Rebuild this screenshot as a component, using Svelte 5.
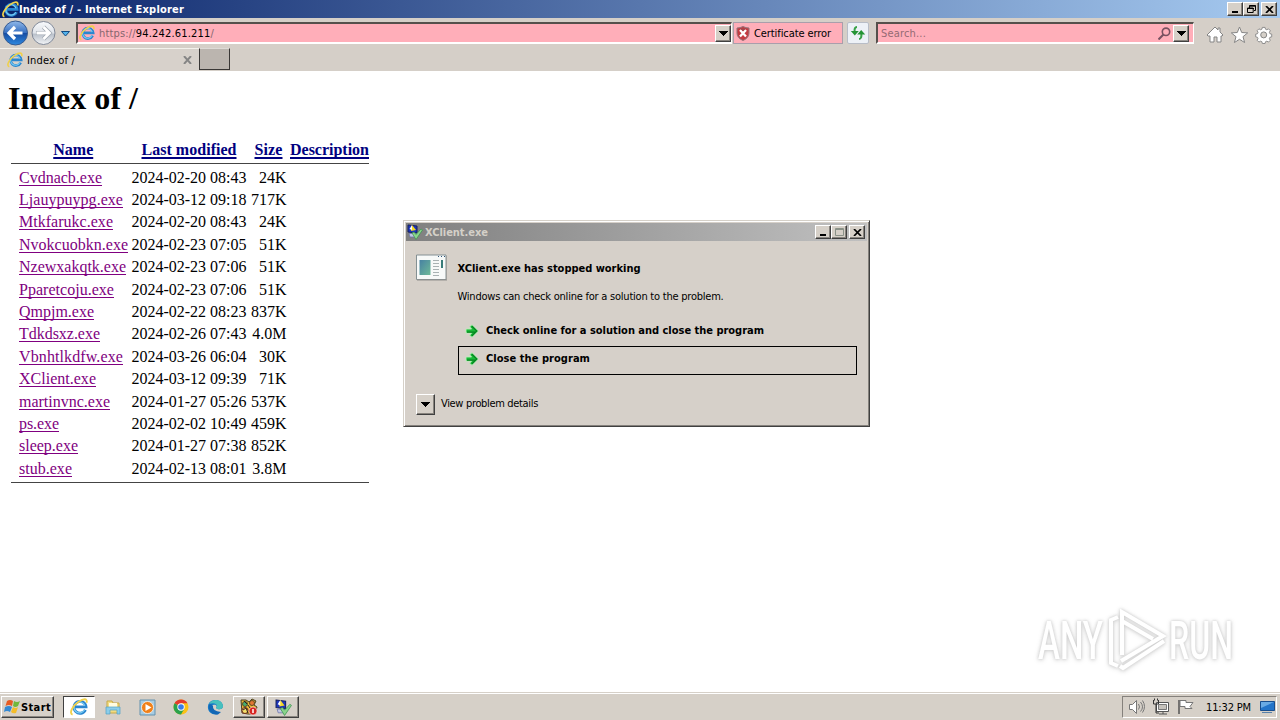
<script>
  const files = [
    ['Cvdnacb.exe', '2024-02-20 08:43', '24K', 83],
    ['Ljauypuypg.exe', '2024-03-12 09:18', '717K', 104],
    ['Mtkfarukc.exe', '2024-02-20 08:43', '24K', 94],
    ['Nvokcuobkn.exe', '2024-02-23 07:05', '51K', 109],
    ['Nzewxakqtk.exe', '2024-02-23 07:06', '51K', 107],
    ['Pparetcoju.exe', '2024-02-23 07:06', '51K', 95],
    ['Qmpjm.exe', '2024-02-22 08:23', '837K', 75],
    ['Tdkdsxz.exe', '2024-02-26 07:43', '4.0M', 81],
    ['Vbnhtlkdfw.exe', '2024-03-26 06:04', '30K', 104],
    ['XClient.exe', '2024-03-12 09:39', '71K', 77],
    ['martinvnc.exe', '2024-01-27 05:26', '537K', 91],
    ['ps.exe', '2024-02-02 10:49', '459K', 40],
    ['sleep.exe', '2024-01-27 07:38', '852K', 59],
    ['stub.exe', '2024-02-13 08:01', '3.8M', 53]
  ];

  // Spreads the letters of a label so that it fills the given width.
  function fit(node, width) {
    const natural = node.getBoundingClientRect().width;
    node.style.letterSpacing = `${(width - natural) / node.textContent.length}px`;
  }
</script>

{#snippet ie(size)}
  <svg width={size} height={size} viewBox="0 0 16 16">
    <path d="M13.700 10.600a5.300 5.300 0 1 1 .5-2.700H5" fill="none" stroke="#2a86cf" stroke-width="2.600" />
    <path d="M12.900 10.500a4.900 4.900 0 1 1 .3-3.500" fill="none" stroke="#79cdf4" stroke-width="1.100" />
    <path d="M2.300 14.800C-1.300 13.600 2.400 7 7.600 3.400 11.600.6 15.800-.2 14.700 4.300" fill="none" stroke="#f0d04a" stroke-width="1.600" />
  </svg>
{/snippet}

{#snippet caret()}
  <svg width="9" height="5" viewBox="0 0 9 5" shape-rendering="crispEdges"><path d="M0 0h9L4.500 5z" fill="#000" /></svg>
{/snippet}

{#snippet go()}
  <svg width="14" height="14" viewBox="0 0 14 14">
    <path d="M1 5h5.500L4.700 2.800 7 .7 13.300 7 7 13.300l-2.300-2L6.500 9H1z" fill="#17b936" stroke="#b9efb8" stroke-width=".9" />
    <path d="M7 2.300 11.800 7 7 11.700M2 8.200h9" fill="none" stroke="#078421" stroke-width="1.200" />
  </svg>
{/snippet}

{#snippet appIcon(size)}
  <svg width={size} height={size} viewBox="0 0 16 16">
    <path d="M1 1 10 2v7L1 8z" fill="#1d35bd" stroke="#15205f" />
    <path d="m5 1 4 5-5 1z" fill="#f5d728" /><path d="m2.500 5 2.500-4v5z" fill="#fff" />
    <path d="M2 9.500h7l1 3.500H3z" fill="#c2c6e4" stroke="#6670aa" stroke-width=".7" />
    <path d="m5 9 4 6.500L15.500 6 14 5 9 10.500 7 8z" fill="#8bd58c" stroke="#3a9150" stroke-width=".7" />
  </svg>
{/snippet}

{#snippet closeGlyph()}
  <svg width="9" height="7" viewBox="0 0 9 7"><path d="m1 0 7 7M8 0 1 7" stroke="#000" stroke-width="1.700" /></svg>
{/snippet}

<main>
  <header class="title">
    {@render ie(17)}
    <b><span use:fit={165}>Index of / - Internet Explorer</span></b>
    <div class="controls">
      <i class="win"><svg width="9" height="8"><path d="M1 6h6v2H1z" /></svg></i>
      <i class="win"><svg width="9" height="8"><path d="M2.500 3V.5h6v5H7M2 1.200h7M.5 3h5.700v4.500H.5zM0 3.500h7" fill="none" stroke="#000" /></svg></i>
      <i class="win gap">{@render closeGlyph()}</i>
    </div>
  </header>

  <nav>
    <svg class="travel" width="74" height="29" viewBox="0 0 74 29">
      <defs>
        <linearGradient id="blue" x2="0" y2="1"><stop stop-color="#91b9ea" /><stop offset=".48" stop-color="#3971c2" /><stop offset=".52" stop-color="#164da4" /><stop offset="1" stop-color="#2f8ae0" /></linearGradient>
        <linearGradient id="silver" x2="0" y2="1"><stop stop-color="#f8fafc" /><stop offset=".5" stop-color="#dfe3e9" /><stop offset=".55" stop-color="#b9c0ca" /><stop offset="1" stop-color="#f3f5f7" /></linearGradient>
      </defs>
      <circle cx="15.500" cy="15" r="12" fill="url(#blue)" stroke="#375b91" />
      <circle cx="43.500" cy="15" r="11.500" fill="url(#silver)" stroke="#818998" />
      <path d="M15 9 9 15l6 6M9.500 15h13" fill="none" stroke="#fff" stroke-width="3.200" />
      <path d="m43.500 9 6 6-6 6M49 15H36" fill="none" stroke="#9da4ae" stroke-width="4.200" />
      <path d="m43.500 9 6 6-6 6M49 15H36.500" fill="none" stroke="#fff" stroke-width="2.800" />
      <path d="M61.500 13.500h8l-4 4.500z" fill="#52b3ec" stroke="#124b82" />
    </svg>
    <div class="address">
      {@render ie(16)}
      <span class="url"><span use:fit={115}><em>https://</em>94.242.61.211<em>/</em></span></span>
      <i class="drop">{@render caret()}</i>
    </div>
    <div class="cert">
      <svg width="14" height="15" viewBox="0 0 14 15"><path d="M1 2q3 0 6-1.500Q10 2 13 2v5q0 5-6 7.500Q1 12 1 7z" fill="#c43b42" stroke="#93747a" /><path d="m4 4 6 6.500m0-6.500-6 6.500" stroke="#fff" stroke-width="2.300" /><path d="M4 2.500h6L7 5z" fill="#9d4a4e" /></svg>
      <span class="low" use:fit={77}>Certificate error</span>
    </div>
    <div class="refresh">
      <svg width="16" height="14" viewBox="0 0 16 14"><path d="M7 1Q4 1 4.700 6M9 13q3 0 2.300-6" fill="none" stroke="#38a247" stroke-width="2" /><path d="M.8 5h8L4.800 9.500zM7.200 8.500h8l-4-4.500z" fill="#249435" /></svg>
    </div>
    <div class="search">
      <span class="low"><span use:fit={45}>Search...</span></span>
      <svg class="lens" width="13" height="13" viewBox="0 0 13 13"><circle cx="8" cy="4.800" r="3.700" fill="none" stroke="#785160" stroke-width="1.600" /><path d="m5.500 7.500-5 5" stroke="#785160" stroke-width="2" /></svg>
      <i class="drop">{@render caret()}</i>
    </div>
    <svg class="tools" width="68" height="18" viewBox="0 0 68 18">
      <g fill="#fff" stroke="#858585" stroke-width="1">
        <path d="m1 9 8-8 3 3V2h2v4l3 3-1 1h-1v6h-4v-5H8v5H4v-6H2z" />
        <path d="m33.500 1 2.200 5.500 6 .4-4.700 3.800 1.600 5.800-5.100-3.200-5.100 3.200 1.600-5.800-4.700-3.800 6-.4z" />
        <path d="m56.500 1h3l.5 2 1.500.6 1.800-1 2 2-1 1.900.6 1.500 2 .5v3l-2 .5-.6 1.500 1 1.800-2 2-1.800-1-1.500.6-.5 2h-3l-.5-2-1.500-.6-1.800 1-2-2 1-1.800-.6-1.500-2-.5v-3l2-.5.6-1.500-1-1.900 2-2 1.800 1 1.500-.6z" transform="translate(5.500 .5) scale(.9)" />
        <circle cx="57.700" cy="8.900" r="3" fill="#d5d0c9" />
      </g>
    </svg>
  </nav>

  <div class="tabs">
    <div class="tab">
      {@render ie(16)}
      <span class="low" use:fit={48}>Index of /</span>
      <svg width="9" height="8" viewBox="0 0 9 8"><path d="m1 0 7 8M8 0 1 8" stroke="#858585" stroke-width="1.900" /></svg>
    </div>
    <div class="newtab"></div>
  </div>

  <section class="page">
    <h1><span use:fit={130}>Index of /</span></h1>
    <div class="listing">
      <div class="row head">
        <a><span use:fit={40}>Name</span></a><a><span use:fit={95}>Last modified</span></a><a><span use:fit={28}>Size</span></a><a><span use:fit={79}>Description</span></a>
      </div>
      <div class="files">
        {#each files as [name, date, size, width]}
          <div class="row"><a><span use:fit={width}>{name}</span></a><span><span use:fit={115}>{date}</span></span><span class="size">{size}</span></div>
        {/each}
      </div>
    </div>
  </section>

  <footer>
    <div class="task start">
      <svg width="17" height="16" viewBox="0 0 17 16"><path d="M3 2q3-2 6 0L8 7Q5 5 1.500 7z" fill="#e65b23" /><path d="M10 2q3 2 6 0l-2 5q-3 2-5 0z" fill="#71b83b" /><path d="M1 8q4-2 7 0l-2 5q-3-2-6 0z" fill="#3389d3" /><path d="M9 8q3 2 5 0l-2 6q-3 1-5-1z" fill="#f4bd29" /></svg>
      <b><span use:fit={30}>Start</span></b>
    </div>
    <div class="task active">{@render ie(18)}</div>
    <div class="quick">
      <svg width="17" height="17" viewBox="0 0 17 17"><path d="M2 2h5l1 2h6v10H2z" fill="#f3dc80" stroke="#c6a949" /><path d="M4 4h8v5H4z" fill="#fffce1" /><path d="M1 8h14v7h-3v-4H5v4H1z" fill="#8bcdea" stroke="#50a0c4" stroke-width=".7" /></svg>
    </div>
    <div class="quick">
      <svg width="17" height="17" viewBox="0 0 17 17"><path d="M1 1h15v15H1z" fill="#a7cce2" stroke="#6592af" /><circle cx="8.500" cy="8.500" r="6" fill="#f08019" stroke="#fff" stroke-width=".7" /><path d="m6.500 5 6 3.500-6 3.500z" fill="#fff" /></svg>
    </div>
    <div class="quick">
      <svg width="16" height="16" viewBox="0 0 16 16"><circle cx="8" cy="8" r="7.500" fill="#fbc116" /><path d="M8 8 1.500 4.300A7.500 7.500 0 0 1 14.500 4.300H8z" fill="#e33b2e" /><path d="M1.500 4.300A7.500 7.500 0 0 0 8 15.500l3.200-5.600L8 8z" fill="#2ba24c" /><circle cx="8" cy="8" r="3.700" fill="#fff" /><circle cx="8" cy="8" r="2.800" fill="#397de8" /></svg>
    </div>
    <div class="quick">
      <svg width="17" height="16" viewBox="0 0 17 16"><path d="M1 7C2-1 15-1 16 7c0 4-5 4-7 2 2-3-1-4-3-3-4 2-2 8 5 9C6 17 0 13 1 7z" fill="#187bc8" /><path d="M2 5C5-1 15 0 16 7c0 4-5 4-7 2 3-4-2-6-7-4z" fill="#48c0bd" /><path d="M6 7q-1 5 8 6l-3 2.500C5 16 1 12 2 6q2-2 4 1z" fill="#1267b5" /></svg>
    </div>
    <div class="task window">
      <svg width="18" height="18" viewBox="0 0 18 18"><path d="M1 2h5l3 2 3-3 4 2-2 4 3 2-2 7H8l-6-1z" fill="#e9b936" stroke="#4a4122" /><circle cx="5" cy="6" r="2.500" fill="#45ad70" stroke="#614c22" /><circle cx="12" cy="5" r="2.500" fill="#e47734" stroke="#614c22" /><circle cx="5" cy="12.500" r="3" fill="#f4df69" stroke="#6e291f" /><circle cx="13" cy="13" r="4" fill="#d62622" stroke="#fff" stroke-width=".5" /><path d="m3 12 3-2 2 5M4 3l3 3M8 7l2 3" stroke="#30221d" fill="none" /><path d="M13 11v4" stroke="#fff" stroke-width="1.500" /></svg>
    </div>
    <div class="task window">{@render appIcon(17)}</div>
    <div class="tray">
      <svg width="68" height="18" viewBox="0 0 68 18" fill="none" stroke="#555">
        <path d="M1.500 6.500h3l4-4v13l-4-4h-3z" fill="#fff" stroke="#777" /><path d="M10.500 6q2 3 0 5.500M12.500 4q4 5 0 9.500M14.500 2.500q4 6 0 12" stroke="#777" />
        <path d="M28.500 4.500h12v9h-12z" fill="#fff" /><path d="M30.500 6.500h8v5h-8z" fill="#c6c2bc" stroke="#777" /><path d="M31 16h8M35 14v2" /><path d="M25.500 2v4h5V2M28 6v9h3M26.500.5v2m3-2v2" stroke="#333" />
        <path d="M51 2v14" stroke-width="1.500" /><path d="M52 2.500h6v2h7l-3 4 2 2h-7v-2h-5z" fill="#fff" stroke="#777" />
      </svg>
      <span use:fit={45}>11:32 PM</span>
      <svg width="15" height="14" viewBox="0 0 15 14"><path d="M.5 1.500h14v9H.5z" fill="#2374c9" stroke="#184d8d" /><path d="M1 2h13L1 8z" fill="#69aae4" /><path d="M2 12.500h10" stroke="#5880a9" /></svg>
    </div>
  </footer>

  <div class="dialog">
    <div class="caption">
      {@render appIcon(16)}
      <b><span use:fit={63}>XClient.exe</span></b>
      <div class="controls">
        <i class="win"><svg width="9" height="8"><path d="M1 6h6v2H1z" /></svg></i>
        <i class="win"><svg width="9" height="8"><path d="M.5.5h8v7h-8zM0 1.500h9" fill="none" stroke="#8b9288" /></svg></i>
        <i class="win gap">{@render closeGlyph()}</i>
      </div>
    </div>
    <div class="message">
      <svg width="31" height="27" viewBox="0 0 31 27"><defs><linearGradient id="pic" x2="1" y2="1"><stop stop-color="#4781a2" /><stop offset="1" stop-color="#6eba98" /></linearGradient></defs><path d="M.5 1h29.500v24.500H.5z" fill="#f7f9f8" stroke="#849093" /><path d="M1 26h30V2" fill="none" stroke="#92908d" /><path d="M3.500 6h11v15h-11z" fill="url(#pic)" /><path d="M17 6.500h6M17 9.500h6M17 12.500h6M17 15.500h6M17 18.500h6M17 21.500h6" stroke="#a9b2b3" /><path d="M25 6h2v8h-2z" fill="#387c79" /><path d="M22 2.500h1m2 0h1m2 0h1" stroke="#31577b" /></svg>
      <div class="copy">
        <b><span use:fit={183}>XClient.exe has stopped working</span></b>
        <p><span use:fit={266}>Windows can check online for a solution to the problem.</span></p>
      </div>
    </div>
    <div class="choice">{@render go()}<b><span use:fit={278}>Check online for a solution and close the program</span></b></div>
    <div class="choice focus">{@render go()}<b><span use:fit={104}>Close the program</span></b></div>
    <div class="details"><i class="drop">{@render caret()}</i><span use:fit={97}>View problem details</span></div>
  </div>

  <svg class="mark" width="210" height="70" viewBox="0 0 210 70">
    <g class="ghost">
      <text x="8" y="52" textLength="65" lengthAdjust="spacingAndGlyphs">ANY</text>
      <text x="139" y="52" textLength="64" lengthAdjust="spacingAndGlyphs">RUN</text>
      <path d="M92 48V5l41 24-42 25M88 10l-7 3v43l7 3M92 14l31 18M134 34 93 61l-3-2" fill="none" stroke="#fff" stroke-width="4" />
    </g>
  </svg>
</main>

<style>
  :global(body) { margin: 0; overflow: hidden; background: #fff; }
  main { position: relative; display: flex; flex-direction: column; width: 1280px; height: 720px; font: 11px/14px "DejaVu Sans Condensed", "DejaVu Sans", sans-serif; font-stretch: condensed; color: #000; white-space: nowrap; }
  svg { display: block; flex: none; }
  i, em { font-style: normal; }
  em { color: #85666e; }
  .title { display: flex; align-items: center; height: 18px; padding: 0 3px 0 2px; background: linear-gradient(90deg, #0a246a, #a6caf0); color: #fff; box-sizing: border-box; }
  .title b, .low { padding-top: 2px; }
  .controls { display: flex; margin-left: auto; }
  .win, .drop { display: flex; justify-content: center; align-items: center; box-sizing: border-box; background: #d6d0c8; border: 1px solid; border-color: #fff #404040 #404040 #fff; box-shadow: inset -1px -1px #87837d; }
  .win { width: 16px; height: 14px; }
  .gap { margin-left: 2px; }
  nav { display: flex; height: 30px; background: #d5cfc8; box-sizing: border-box; }
  .address, .search { display: flex; align-items: center; height: 22px; margin-top: 4px; box-sizing: border-box; border: 2px solid; border-color: #55504c #fff #fff #55504c; border-right-width: 1px; background: #ffaeb9; }
  .address { width: 656px; margin-left: 2px; padding-left: 1px; }
  .url { margin-left: 4px; padding-top: 2px; }
  .address .drop { margin-left: auto; width: 16px; height: 17px; }
  .cert { display: flex; gap: 4px; align-items: center; width: 110px; height: 22px; margin: 4px 0 0 1px; padding-left: 2px; box-sizing: border-box; border: 1px solid #a99eab; background: #ffaeb9; }
  .refresh { display: flex; align-items: center; justify-content: center; width: 22px; height: 22px; margin: 4px 0 0 4px; box-sizing: border-box; border: 1px solid #b8bdc7; border-radius: 2px; background: #edf1f7; }
  .search { width: 318px; margin-left: 7px; padding: 0 4px 0 3px; color: #946a73; }
  .lens { margin-left: auto; }
  .search .drop { width: 16px; height: 17px; margin-left: 2px; }
  .tools { margin: 8px 0 0 12px; }
  .tabs { display: flex; height: 23px; background: #d5cfc8; box-sizing: border-box; }
  .tab { display: flex; align-items: center; gap: 4px; width: 199px; box-sizing: border-box; padding: 0 7px 0 7px; border-top: 1px solid #f4f1ec; background: #d7d1cb; }
  .tab svg:last-child { margin-left: auto; }
  .newtab { width: 31px; height: 22px; box-sizing: border-box; border: 1px solid; border-color: #dedad6 #393735 #393735 #393735; background: #bbb5af; }
  .page { flex: 1; padding: 9px 8px 0; font: 16px/19px "Liberation Serif", serif; }
  h1 { font-size: 32px; line-height: 37px; margin: 0; }
  .listing { width: 358px; margin: 23px 0 0 3px; }
  .row { display: grid; grid-template-columns: 120.5px 115px 40px 82.5px; height: 22.4px; align-items: center; }
  a { color: #800080; text-decoration: underline; text-decoration-thickness: 1px; text-underline-offset: 2px; text-decoration-skip-ink: none; }
  .row.head { height: 23px; align-items: start; font-weight: bold; text-align: center; }
  .head a { color: #000080; text-decoration-thickness: 2px; }
  .head a:first-child { padding-left: 4px; }
  .head a:nth-child(3) { text-align: right; padding-right: 4px; }
  .head a:nth-child(4) { text-align: right; }
  .files { border: solid #444; border-width: 1px 0; padding: 2px 0 3px; }
  .files a { padding-left: 8px; }
  .size { text-align: right; }
  footer { display: flex; align-items: center; height: 28px; padding: 2px 3px 0 1px; box-sizing: border-box; background: #d6d0c8; box-shadow: inset 0 1px #d6d0c8, inset 0 2px #fff; }
  .task { display: flex; align-items: center; justify-content: center; height: 22px; box-sizing: border-box; border: 1px solid; border-color: #fff #404040 #404040 #fff; box-shadow: inset -1px -1px #8b8781; }
  .start { width: 53px; margin-right: 9px; }
  .start b, .tray span { padding-top: 1px; }
  .active { width: 32px; background: #fff; border-color: #404040 #fff #fff #404040; box-shadow: none; margin-right: 1px; }
  .quick { display: flex; justify-content: center; width: 34px; }
  .window { width: 32px; margin-left: 1px; margin-right: 1px; }
  .tray { display: flex; align-items: center; width: 155px; height: 22px; margin-left: auto; padding: 0 1px 0 5px; box-sizing: border-box; border: 1px solid; border-color: #85817c #fff #fff #85817c; }
  .tray span { margin-left: 10px; }
  .tray svg:last-child { margin-left: auto; }
  .dialog { position: absolute; left: 403px; top: 220px; width: 467px; height: 207px; box-sizing: border-box; border: 1px solid; border-color: #d5d0c8 #404040 #404040 #d5d0c8; background: #d6d0c9; box-shadow: inset 1px 1px #fff, inset -1px -1px #85817c; padding: 2px; }
  .caption { display: flex; align-items: center; height: 18px; padding: 0 2px 0 1px; background: linear-gradient(90deg, #808080, #c0c0c0); color: #d4d0c8; }
  .caption b { margin-left: 2px; padding-top: 1px; }
  .message { display: flex; align-items: flex-start; margin: 13px 0 0 10px; gap: 10.500px; }
  .copy { padding-top: 8px; }
  p { margin: 14px 0 0; }
  .choice { display: flex; align-items: center; gap: 7px; width: 399px; height: 29px; margin-left: 52px; padding: 0 6px 2px; box-sizing: border-box; border: 1px solid transparent; }
  .message + .choice { margin-top: 13px; }
  .focus { border-color: #000; padding-bottom: 3px; }
  .details { display: flex; align-items: center; gap: 6px; margin: 19px 0 0 10px; }
  .details .drop { width: 19px; height: 21px; }
  .details > span { padding-bottom: 1px; }
  .mark { position: absolute; left: 1030px; top: 607px; overflow: visible; }
  .ghost { filter: drop-shadow(0 0 1.500px #ccc) drop-shadow(0 1px 2px #ddd); }
  .mark text { font: 500 53px Roboto, sans-serif; fill: #fff; }
</style>
